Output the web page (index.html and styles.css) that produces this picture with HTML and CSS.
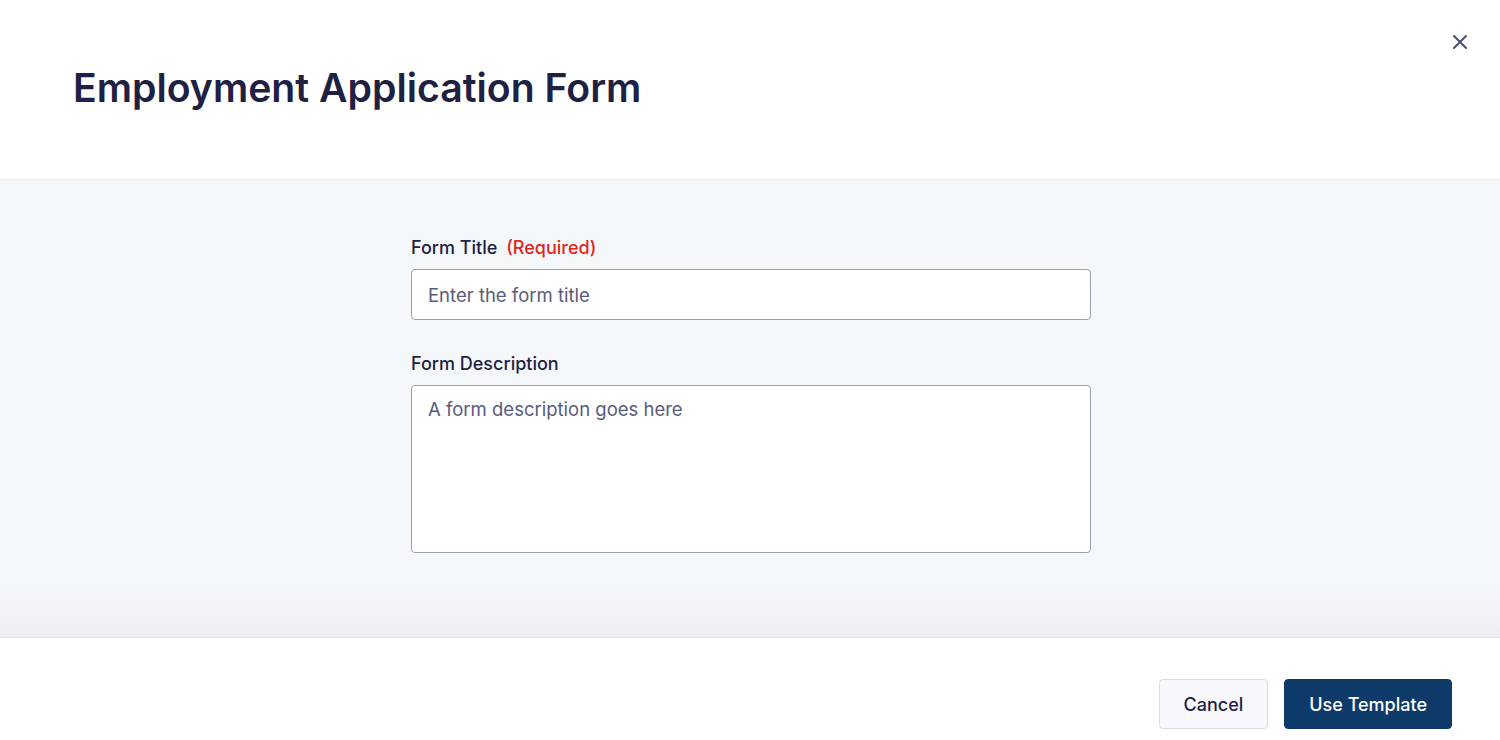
FILE: index.html
```html
<!DOCTYPE html>
<html lang="en">
<head>
  <meta charset="UTF-8">
  <title>Employment Application Form</title>
  <link rel="stylesheet" href="styles.css">
</head>
<body>
  <div class="modal">
    <div class="modal-header">
      <h1>Employment Application Form</h1>
      <button class="close-btn" aria-label="Close">
        <svg width="16" height="16" viewBox="0 0 16 16"><path d="M2 2 L14 14 M14 2 L2 14" stroke="#4a4f73" stroke-width="2" stroke-linecap="round"/></svg>
      </button>
    </div>
    <div class="modal-body">
      <div class="form">
        <div class="field">
          <label for="form_title">Form Title <span class="required">(Required)</span></label>
          <input type="text" id="form_title" placeholder="Enter the form title">
        </div>
        <div class="field">
          <label for="form_desc">Form Description</label>
          <textarea id="form_desc" placeholder="A form description goes here"></textarea>
        </div>
      </div>
    </div>
    <div class="modal-footer">
      <button class="btn btn-cancel">Cancel</button>
      <button class="btn btn-primary">Use Template</button>
    </div>
  </div>
</body>
</html>
```
FILE: styles.css
```css
body {
  margin: 0;
  font-family: Inter, 'Noto Sans', Arial, sans-serif;
  background: #fff;
  color: #1f2143;
  overflow: hidden;
}
.modal {
  display: flex;
  flex-direction: column;
  height: 740px;
}
.modal-header {
  height: 180px;
  flex-shrink: 0;
  border-bottom: 1px solid #ecebf3;
  display: flex;
  justify-content: space-between;
  align-items: flex-start;
  padding: 0 32px 0 73px;
  box-sizing: border-box;
}
.modal-header h1 {
  margin: 64px 0 0 0;
  font-size: 39.2px;
  font-weight: 600;
  line-height: 48px;
  color: #1f2143;
}
.close-btn {
  margin-top: 34px;
  background: none;
  border: none;
  padding: 0;
  width: 16px;
  height: 16px;
  cursor: pointer;
}
.modal-body {
  height: 458px;
  flex-shrink: 0;
  box-sizing: border-box;
  background: linear-gradient(to bottom, #f5f8fb 0%, #f5f8fb 88%, #eceef4 100%);
  display: flex;
  justify-content: center;
  border-bottom: 1px solid #e6e4f3;
}
.form {
  width: 680px;
  margin-left: 2px;
  padding-top: 56px;
  display: flex;
  flex-direction: column;
  gap: 32px;
}
.field label {
  display: block;
  font-size: 18px;
  font-weight: 500;
  line-height: 24px;
  margin-bottom: 9px;
  color: #1f2143;
}
.required {
  color: #e0261b;
  margin-left: 4px;
}
.field input,
.field textarea {
  display: block;
  width: 100%;
  box-sizing: border-box;
  border: 1px solid #9c9eb8;
  border-radius: 4px;
  background: #fff;
  font-family: inherit;
  font-size: 18.5px;
  color: #1f2143;
  padding: 0 16px;
  outline: none;
}
.field input {
  height: 51px;
}
.field textarea {
  height: 168px;
  padding-top: 11px;
  resize: none;
  line-height: 24px;
}
.field input::placeholder,
.field textarea::placeholder {
  color: #585b7c;
}
.modal-footer {
  flex: 1;
  display: flex;
  justify-content: flex-end;
  align-items: flex-start;
  gap: 16px;
  padding: 41px 48px 0 0;
  box-sizing: border-box;
}
.btn {
  height: 50px;
  border-radius: 4px;
  font-family: inherit;
  font-size: 18px;
  font-weight: 500;
  padding: 0 24px;
  cursor: pointer;
}
.btn-cancel {
  background: #f8f8fc;
  border: 1px solid #dcdbe9;
  color: #1f2143;
}
.btn-primary {
  background: #0e3a6a;
  border: 1px solid #0e3a6a;
  color: #fff;
}
```
